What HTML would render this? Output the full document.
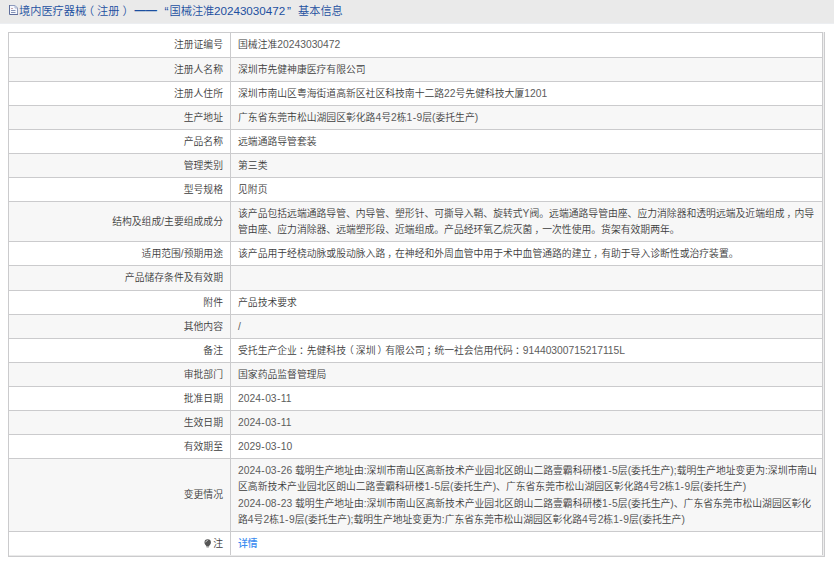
<!DOCTYPE html>
<html lang="zh-CN">
<head>
<meta charset="utf-8">
<title>境内医疗器械（注册）</title>
<style>
html,body{margin:0;padding:0;background:#fff;}
body{width:834px;height:561px;overflow:hidden;font-family:"Liberation Sans","Noto Sans CJK SC",sans-serif;font-size:9.82px;color:#3c3c3c;font-weight:350;}
.hd{height:23px;border-bottom:1px solid #eceef1;background:#eaeaea;color:#1c4fa0;font-size:11.2px;white-space:nowrap;position:relative;}
.hd svg{position:absolute;left:9px;top:5px;}
.hd span{position:absolute;top:0;line-height:22px;}
.hd .n{font-size:11.65px;}
.hd .q{font-size:12px;top:1px;}
table{position:absolute;left:8px;top:32px;width:815px;border-collapse:separate;border-spacing:0;table-layout:fixed;border-top:1px solid #cbcbcd;border-left:1px solid #cbcbcd;}
td{border-bottom:1px solid #cbcbcd;border-right:1px solid #cbcbcd;height:24px;padding:3.5px 7px 2.5px 7px;line-height:16.5px;vertical-align:middle;box-sizing:border-box;}
td.l{width:222px;text-align:right;}
td{white-space:nowrap;}
td .n{font-size:10.3px;}
.pr{position:relative;left:2px;}
.pl{position:relative;left:-2px;}
tr:nth-child(even) td{background:#f7f7f7;}
tr.h25 td{height:25px;}
tr:last-child td{border-bottom:0;height:23px;}
a{color:#3a8cf0;text-decoration:none;font-weight:500;}
.ic{display:inline-block;vertical-align:-1px;margin-right:1.4px;}
td .n{color:#5c5c5c;}
td .n i{font-style:normal;margin:0 0.4px;}
.rb{position:absolute;left:823px;top:32px;width:1px;height:523px;border-right:1px solid #cbcbcd;background:#eee;}
.bb{position:absolute;left:8px;top:555px;width:815px;height:1px;background:#eaeaea;border:1px solid #cbcbcd;border-top:0;}
</style>
</head>
<body>
<div class="hd"><svg width="9" height="10" viewBox="0 0 9 10"><path d="M0.5 0.5h5.5l2.500 2.500v6.500h-8z" fill="#f6f8fd"/><path d="M0.500 0.500h5.500l2.500 2.500v6.500" fill="none" stroke="#8c99bb"/><path d="M0.500 0v9.500h8.500" fill="none" stroke="#5f6e9b"/><path d="M6 0.500v2.500h2.500" fill="none" stroke="#a9b4d0"/><path d="M2 5.500h4.500M2 7.500h4.500" stroke="#8593b8"/><path d="M2 3.500h2" stroke="#c3a3ad"/></svg><span style="left:19px">境内医疗器械</span><span style="left:83px">（</span><span style="left:97px">注册</span><span style="left:122.5px">）</span><span style="left:134.5px;top:-1px;font-weight:700">——</span><span class="q" style="left:164.5px">“</span><span style="left:169.5px">国械注准</span><span class="n" style="left:214px">20243030472</span><span class="q" style="left:287px">”</span><span style="left:298px">基本信息</span></div>
<table>
<tr class="h25"><td class="l">注册证编号</td><td>国械注准<span class="n">20243030472</span></td></tr>
<tr><td class="l">注册人名称</td><td>深圳市先健神康医疗有限公司</td></tr>
<tr><td class="l">注册人住所</td><td>深圳市南山区粤海街道高新区社区科技南十二路<span class="n">22</span>号先健科技大厦<span class="n">1201</span></td></tr>
<tr><td class="l">生产地址</td><td>广东省东莞市松山湖园区彰化路<span class="n">4</span>号<span class="n">2</span>栋<span class="n">1<i>-</i>9</span>层<span class="n">(</span>委托生产<span class="n">)</span></td></tr>
<tr><td class="l">产品名称</td><td>远端通路导管套装</td></tr>
<tr><td class="l">管理类别</td><td>第三类</td></tr>
<tr><td class="l">型号规格</td><td>见附页</td></tr>
<tr><td class="l">结构及组成<span class="n">/</span>主要组成成分</td><td>该产品包括远端通路导管、内导管、塑形针、可撕导入鞘、旋转式<span class="n">Y</span>阀。远端通路导管由座、应力消除器和透明远端及近端组成<span class="pr">，</span>内导<br>管由座、应力消除器、远端塑形段、近端组成。产品经环氧乙烷灭菌<span class="pr">，</span>一次性使用。货架有效期两年。</td></tr>
<tr><td class="l">适用范围<span class="n">/</span>预期用途</td><td>该产品用于经桡动脉或股动脉入路<span class="pr">，</span>在神经和外周血管中用于术中血管通路的建立<span class="pr">，</span>有助于导入诊断性或治疗装置。</td></tr>
<tr class="h25"><td class="l">产品储存条件及有效期</td><td></td></tr>
<tr><td class="l">附件</td><td>产品技术要求</td></tr>
<tr><td class="l">其他内容</td><td><span class="n">/</span></td></tr>
<tr><td class="l">备注</td><td>受托生产企业<span class="pr">：</span>先健科技<span class="pl">（</span>深圳<span class="pr">）</span>有限公司<span class="pr">；</span>统一社会信用代码<span class="pr">：</span><span class="n">91440300715217115L</span></td></tr>
<tr><td class="l">审批部门</td><td>国家药品监督管理局</td></tr>
<tr><td class="l">批准日期</td><td><span class="n">2024<i>-</i>03<i>-</i>11</span></td></tr>
<tr><td class="l">生效日期</td><td><span class="n">2024<i>-</i>03<i>-</i>11</span></td></tr>
<tr><td class="l">有效期至</td><td><span class="n">2029<i>-</i>03<i>-</i>10</span></td></tr>
<tr><td class="l">变更情况</td><td><span class="n">2024<i>-</i>03<i>-</i>26</span> 载明生产地址由<span class="n">:</span>深圳市南山区高新技术产业园北区朗山二路壹霸科研楼<span class="n">1<i>-</i>5</span>层<span class="n">(</span>委托生产<span class="n">);</span>载明生产地址变更为<span class="n">:</span>深圳市南山<br>区高新技术产业园北区朗山二路壹霸科研楼<span class="n">1<i>-</i>5</span>层<span class="n">(</span>委托生产<span class="n">)</span>、广东省东莞市松山湖园区彰化路<span class="n">4</span>号<span class="n">2</span>栋<span class="n">1<i>-</i>9</span>层<span class="n">(</span>委托生产<span class="n">)</span><br><span class="n">2024<i>-</i>08<i>-</i>23</span> 载明生产地址由<span class="n">:</span>深圳市南山区高新技术产业园北区朗山二路壹霸科研楼<span class="n">1<i>-</i>5</span>层<span class="n">(</span>委托生产<span class="n">)</span>、广东省东莞市松山湖园区彰化<br>路<span class="n">4</span>号<span class="n">2</span>栋<span class="n">1<i>-</i>9</span>层<span class="n">(</span>委托生产<span class="n">);</span>载明生产地址变更为<span class="n">:</span>广东省东莞市松山湖园区彰化路<span class="n">4</span>号<span class="n">2</span>栋<span class="n">1<i>-</i>9</span>层<span class="n">(</span>委托生产<span class="n">)</span></td></tr>
<tr><td class="l"><svg class="ic" width="7.4" height="9.2" viewBox="0 0 8 10"><path d="M4 0.3a3.5 3.5 0 0 1 3.5 3.5c0 1.5-1 2.3-1.7 3.4l-0.3 1h-3l-0.3-1C1.5 6.100.5 5.300.5 3.800A3.500 3.500 0 0 1 4 0.300z" fill="#555"/><rect x="2.700" y="8.1" width="2.6" height="1.2" fill="#999"/><path d="M1.900 3.200a2.200 2.200 0 0 1 1.800-1.700" fill="none" stroke="#eee" stroke-width="0.800" stroke-linecap="round"/></svg>注</td><td><a>详情</a></td></tr>
</table>
<div class="rb"></div><div class="bb"></div>
</body>
</html>
